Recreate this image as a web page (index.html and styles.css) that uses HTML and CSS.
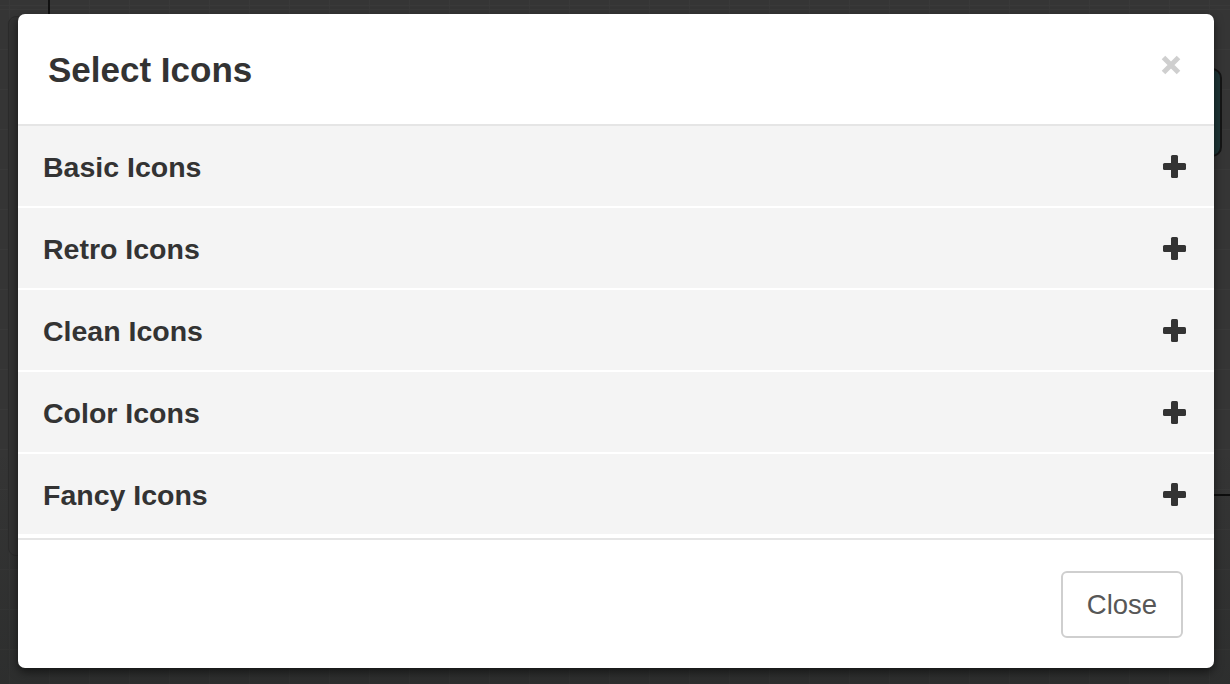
FILE: index.html
```html
<!DOCTYPE html>
<html lang="en">
<head>
<meta charset="utf-8">
<title>Select Icons</title>
<link rel="stylesheet" href="styles.css">
</head>
<body>
<div class="app">
  <div class="bg-panel"></div>
  <div class="bg-vline"></div>
  <div class="bg-widget"></div>
  <div class="bg-hline"></div>
</div>
<div class="backdrop">
  <div class="modal">
    <div class="modal-header">
      <h4 class="modal-title">Select Icons</h4>
      <button class="close" aria-label="Close">
        <svg width="20" height="20" viewBox="0 0 20 20"><path d="M2.5 2.5 L17.5 17.5 M17.5 2.5 L2.5 17.5" stroke="#cfcfcf" stroke-width="5" fill="none"/></svg>
      </button>
    </div>
    <div class="modal-body">
      <div class="panel"><span class="panel-title">Basic Icons</span><span class="plus"></span></div>
      <div class="panel"><span class="panel-title">Retro Icons</span><span class="plus"></span></div>
      <div class="panel"><span class="panel-title">Clean Icons</span><span class="plus"></span></div>
      <div class="panel"><span class="panel-title">Color Icons</span><span class="plus"></span></div>
      <div class="panel"><span class="panel-title">Fancy Icons</span><span class="plus"></span></div>
    </div>
    <div class="modal-footer">
      <button class="btn">Close</button>
    </div>
  </div>
</div>
</body>
</html>
```
FILE: styles.css
```css
* { box-sizing: border-box; }
html, body { margin: 0; padding: 0; }
body {
  width: 1230px;
  height: 684px;
  overflow: hidden;
  position: relative;
  font-family: "Liberation Sans", Arial, sans-serif;
  background-color: #353535;
  background-image:
    linear-gradient(to bottom, rgba(0,0,0,0) 65%, rgba(10,16,14,0.18) 100%),
    repeating-linear-gradient(to right, #393939 0 1px, transparent 1px 40px),
    repeating-linear-gradient(to bottom, #393939 0 1px, transparent 1px 40px);
  background-position: 0 0, 9px 0, 0 9px;
}
.app { position: absolute; inset: 0; }
.bg-panel {
  position: absolute;
  left: 8px; top: 16px;
  width: 200px; height: 540px;
  border: 1px solid #2b2b2b;
  border-radius: 8px;
  background: #323232;
}
.bg-vline {
  position: absolute;
  left: 48px; top: 0;
  width: 2px; height: 14px;
  background: #111;
}
.bg-widget {
  position: absolute;
  left: 1196px; top: 68px;
  width: 26px; height: 89px;
  border: 2px solid #141414;
  border-radius: 10px;
  background: #1d3536;
}
.bg-hline {
  position: absolute;
  left: 1200px; top: 494px;
  width: 30px; height: 2px;
  background: #0d0d0d;
}
.backdrop {
  position: absolute;
  inset: 0;
  padding: 14px 16px 0 18px;
  display: flex;
  align-items: flex-start;
}
.modal {
  width: 1196px;
  background: #fff;
  border-radius: 7px;
  box-shadow: 0 4px 10px rgba(0,0,0,0.55);
  overflow: hidden;
  color: #333;
}
.modal-header {
  height: 112px;
  padding: 0 33px 0 30px;
  border-bottom: 2px solid #e5e5e5;
  display: flex;
  align-items: center;
  justify-content: space-between;
}
.modal-title {
  margin: 0;
  font-size: 35px;
  line-height: 35px;
  font-weight: 700;
  color: #333;
}
.close {
  align-self: flex-start;
  margin-top: 41px;
  padding: 0;
  border: 0;
  background: none;
  width: 20px;
  height: 20px;
  display: block;
}
.close svg { display: block; }
.modal-body {
  padding: 0 0 2px 0;
  border-bottom: 2px solid #e5e5e5;
}
.panel {
  height: 80px;
  margin-bottom: 2px;
  background: #f4f4f4;
  display: flex;
  align-items: center;
  justify-content: space-between;
  padding: 0 28px 0 25px;
}
.panel-title {
  font-size: 28.5px;
  line-height: 29px;
  font-weight: 700;
  color: #333;
  margin-top: 2px;
}
.plus {
  position: relative;
  width: 23px;
  height: 23px;
  margin-top: 1px;
}
.plus::before, .plus::after {
  content: "";
  position: absolute;
  background: #333;
  border-radius: 1.5px;
}
.plus::before { left: 0; top: 8px; width: 23px; height: 7px; }
.plus::after { left: 8px; top: 0; width: 7px; height: 23px; }
.modal-footer {
  height: 128px;
  padding: 0 31px 0 0;
  display: flex;
  align-items: center;
  justify-content: flex-end;
}
.btn {
  width: 122px;
  height: 67px;
  margin-top: 1px;
  border: 2px solid #cfcfcf;
  border-radius: 6px;
  background: #fff;
  color: #575757;
  font-family: "Liberation Sans", Arial, sans-serif;
  font-size: 27.5px;
  padding: 0;
}
```
